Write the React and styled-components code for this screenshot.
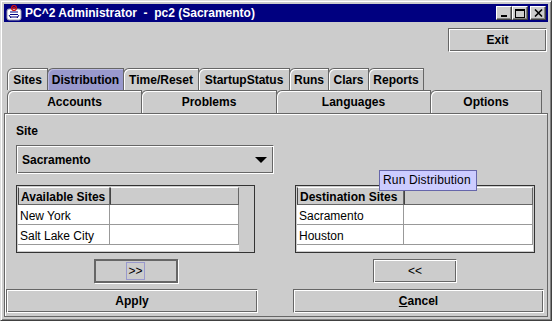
import React from 'react';
import styled, { createGlobalStyle } from 'styled-components';

const GlobalStyle = createGlobalStyle`
  body {
    margin: 0;
    background: #cccccc;
    font-family: "Liberation Sans", Arial, sans-serif;
  }
`;

const Window = styled.div`
  width: 552px;
  height: 321px;
  box-sizing: border-box;
  background: #cccccc;
  border: 1px solid;
  border-color: #dedede #404040 #404040 #dedede;
  box-shadow: inset 1px 1px 0 #ffffff, inset -1px -1px 0 #808080;
  padding: 3px;
  display: flex;
  flex-direction: column;
`;

const TitleBar = styled.div`
  height: 18px;
  flex-shrink: 0;
  background: #000080;
  display: flex;
  align-items: center;
  padding: 0 2px;
  color: #ffffff;
  font-size: 12px;
  font-weight: bold;
  white-space: pre;
`;

const TitleText = styled.span`
  margin-left: 3px;
`;

const WinButtons = styled.div`
  margin-left: auto;
  display: flex;
  align-items: center;
`;

const WinButton = styled.div`
  width: 14px;
  height: 12px;
  background: #cccccc;
  border: 1px solid;
  border-color: #ffffff #404040 #404040 #ffffff;
  box-shadow: inset -1px -1px 0 #808080;
  display: flex;
  align-items: center;
  justify-content: center;
  margin-left: ${p => (p.$gap ? '2px' : '0')};
`;

const TopBar = styled.div`
  height: 46px;
  flex-shrink: 0;
  box-sizing: border-box;
  padding: 6px 1px 0 0;
  display: flex;
  justify-content: flex-end;
  align-items: flex-start;
`;

const Button = styled.button`
  box-sizing: border-box;
  width: ${p => p.$w}px;
  height: 24px;
  margin: 0;
  padding: 0;
  background: #cccccc;
  font-family: "Liberation Sans", Arial, sans-serif;
  font-size: 12px;
  font-weight: ${p => (p.$thin ? 'normal' : 'bold')};
  color: #000000;
  border: 1px solid;
  border-color: #666666 #ffffff #ffffff #666666;
  box-shadow: inset 1px 1px 0 #ffffff, inset -1px -1px 0 #666666;
  display: flex;
  align-items: center;
  justify-content: center;
`;

const DefaultButton = styled(Button)`
  border: 2px solid #666666;
  box-shadow: 1px 1px 0 #ffffff;
`;

const FocusRing = styled.span`
  border: 1px solid #9999cc;
  padding: 0 1px;
  line-height: 16px;
`;

const TabRow = styled.div`
  height: ${p => p.$h}px;
  flex-shrink: 0;
  display: flex;
  align-items: flex-end;
  padding-left: 3px;
`;

const Tab = styled.div`
  box-sizing: border-box;
  width: ${p => p.$w}px;
  height: 100%;
  margin-right: -1px;
  background: ${p => (p.$active ? '#9999cc' : '#cccccc')};
  border: 1px solid #666666;
  border-bottom: none;
  border-top-left-radius: 6px;
  box-shadow: inset 1px 1px 0 ${p => (p.$active ? '#b8b8e0' : '#ffffff')};
  font-size: 12px;
  font-weight: bold;
  display: flex;
  align-items: center;
  justify-content: center;
  padding-top: ${p => p.$pt}px;
`;

const Panel = styled.div`
  flex: 1;
  box-sizing: border-box;
  border: 1px solid #666666;
  box-shadow: inset 1px 1px 0 #ffffff;
  display: flex;
  flex-direction: column;
`;

const Upper = styled.div`
  padding-left: 11px;
  display: flex;
  flex-direction: column;
`;

const SiteLabel = styled.div`
  margin-top: 10px;
  font-size: 12px;
  font-weight: bold;
  line-height: 15px;
`;

const Combo = styled.div`
  box-sizing: border-box;
  margin-top: 6px;
  width: 258px;
  height: 29px;
  border: 1px solid;
  border-color: #666666 #ffffff #ffffff #666666;
  box-shadow: inset 1px 1px 0 #ffffff, inset -1px -1px 0 #666666;
  display: flex;
  align-items: center;
  padding: 0 5px 0 5px;
  font-size: 12px;
  font-weight: bold;
`;

const Arrow = styled.span`
  margin-left: auto;
  width: 0;
  height: 0;
  border-left: 6px solid transparent;
  border-right: 6px solid transparent;
  border-top: 6px solid #000000;
  margin-right: 1px;
`;

const TablesRow = styled.div`
  margin-top: 11px;
  display: grid;
  grid-template-columns: 239px 240px;
  column-gap: 40px;
`;

const Column = styled.div`
  position: relative;
  display: flex;
  flex-direction: column;
  align-items: center;
  gap: 6px;
`;

const ScrollPane = styled.div`
  box-sizing: border-box;
  width: 100%;
  height: 68px;
  border: 1px solid #333333;
  padding: 1px;
  background: #cccccc;
  overflow: hidden;
`;

const Table = styled.div`
  width: ${p => p.$w}px;
  height: 100%;
  background: #ffffff;
  display: grid;
  grid-template-columns: ${p => p.$cols};
  grid-auto-rows: 20px;
  grid-template-rows: 18px;
  font-size: 12px;
`;

const HeadCell = styled.div`
  box-sizing: border-box;
  background: #cccccc;
  border: 1px solid;
  border-color: #ffffff #666666 #666666 #444444;
  font-weight: bold;
  padding: 1px 0 0 2px;
  display: flex;
  align-items: center;
`;

const Cell = styled.div`
  box-sizing: border-box;
  border-bottom: 1px solid #999999;
  border-right: 1px solid #999999;
  padding: 3px 0 0 2px;
  display: flex;
  align-items: center;
`;

const Tooltip = styled.div`
  position: absolute;
  left: 84px;
  top: -15px;
  background: #ccccff;
  border: 1px solid #6666aa;
  font-size: 12px;
  line-height: 19px;
  padding: 0 5px 0 3px;
  letter-spacing: 0.15px;
  color: #000000;
  white-space: nowrap;
`;

const ActionRow = styled.div`
  margin-top: 6px;
  margin-left: 1px;
  display: flex;
  gap: 35px;
`;

const Underline = styled.span`
  text-decoration: underline;
`;

const Logo = () => (
  <svg width="16" height="16" viewBox="0 0 16 16">
    <rect x="1" y="4" width="14" height="11" rx="2" fill="#ffffff" stroke="#9a9ab0" />
    <path d="M4 7h8M4 9.5h8M4 12h8" stroke="#000080" strokeWidth="1" />
    <path d="M3 10l2 3M13 10l-2 3" stroke="#000080" />
    <circle cx="8" cy="3" r="2.5" fill="none" stroke="#d01010" strokeWidth="1.2" />
    <path d="M6 1.5l4 3M10 1.5l-4 3" stroke="#d01010" />
  </svg>
);

const MinIcon = () => (
  <svg width="8" height="8" viewBox="0 0 8 8">
    <rect x="1" y="6" width="6" height="2" fill="#000" />
  </svg>
);

const MaxIcon = () => (
  <svg width="10" height="9" viewBox="0 0 10 9">
    <rect x="0.5" y="0.5" width="9" height="8" fill="none" stroke="#000" />
    <rect x="0" y="0" width="10" height="2" fill="#000" />
  </svg>
);

const CloseIcon = () => (
  <svg width="9" height="8" viewBox="0 0 9 8">
    <path d="M1 0.5L8 7.5M8 0.5L1 7.5" stroke="#000" strokeWidth="1.6" />
  </svg>
);

const topTabs = [
  ['Sites', 41],
  ['Distribution', 77, true],
  ['Time/Reset', 76],
  ['StartupStatus', 92],
  ['Runs', 40],
  ['Clars', 41],
  ['Reports', 56],
];

const bottomTabs = [
  ['Accounts', 135],
  ['Problems', 136],
  ['Languages', 155],
  ['Options', 112],
];

const SiteTable = ({ title, rows, width, cols }) => (
  <ScrollPane>
    <Table $w={width} $cols={cols}>
      <HeadCell>{title}</HeadCell>
      <HeadCell />
      {rows.map(r => (
        <React.Fragment key={r}>
          <Cell>{r}</Cell>
          <Cell />
        </React.Fragment>
      ))}
    </Table>
  </ScrollPane>
);

export default function App() {
  return (
    <>
      <GlobalStyle />
      <Window>
        <TitleBar>
          <Logo />
          <TitleText>{'PC^2 Administrator  -  pc2 (Sacramento)'}</TitleText>
          <WinButtons>
            <WinButton><MinIcon /></WinButton>
            <WinButton><MaxIcon /></WinButton>
            <WinButton $gap><CloseIcon /></WinButton>
          </WinButtons>
        </TitleBar>
        <TopBar>
          <Button $w={99}>Exit</Button>
        </TopBar>
        <TabRow $h={22}>
          {topTabs.map(([name, w, active]) => (
            <Tab key={name} $w={w} $active={active} $pt={1}>{name}</Tab>
          ))}
        </TabRow>
        <TabRow $h={23}>
          {bottomTabs.map(([name, w]) => (
            <Tab key={name} $w={w} $pt={0}>{name}</Tab>
          ))}
        </TabRow>
        <Panel>
          <Upper>
            <SiteLabel>Site</SiteLabel>
            <Combo>
              Sacramento
              <Arrow />
            </Combo>
            <TablesRow>
              <Column>
                <SiteTable
                  title="Available Sites"
                  rows={['New York', 'Salt Lake City']}
                  width={221}
                  cols="92px 129px"
                />
                <DefaultButton $w={84} $thin>
                  <FocusRing>&gt;&gt;</FocusRing>
                </DefaultButton>
              </Column>
              <Column>
                <SiteTable
                  title="Destination Sites"
                  rows={['Sacramento', 'Houston']}
                  width={236}
                  cols="107px 129px"
                />
                <Button $w={84} $thin>&lt;&lt;</Button>
                <Tooltip>Run Distribution</Tooltip>
              </Column>
            </TablesRow>
          </Upper>
          <ActionRow>
            <Button $w={252}>Apply</Button>
            <Button $w={251}><Underline>C</Underline>ancel</Button>
          </ActionRow>
        </Panel>
      </Window>
    </>
  );
}
